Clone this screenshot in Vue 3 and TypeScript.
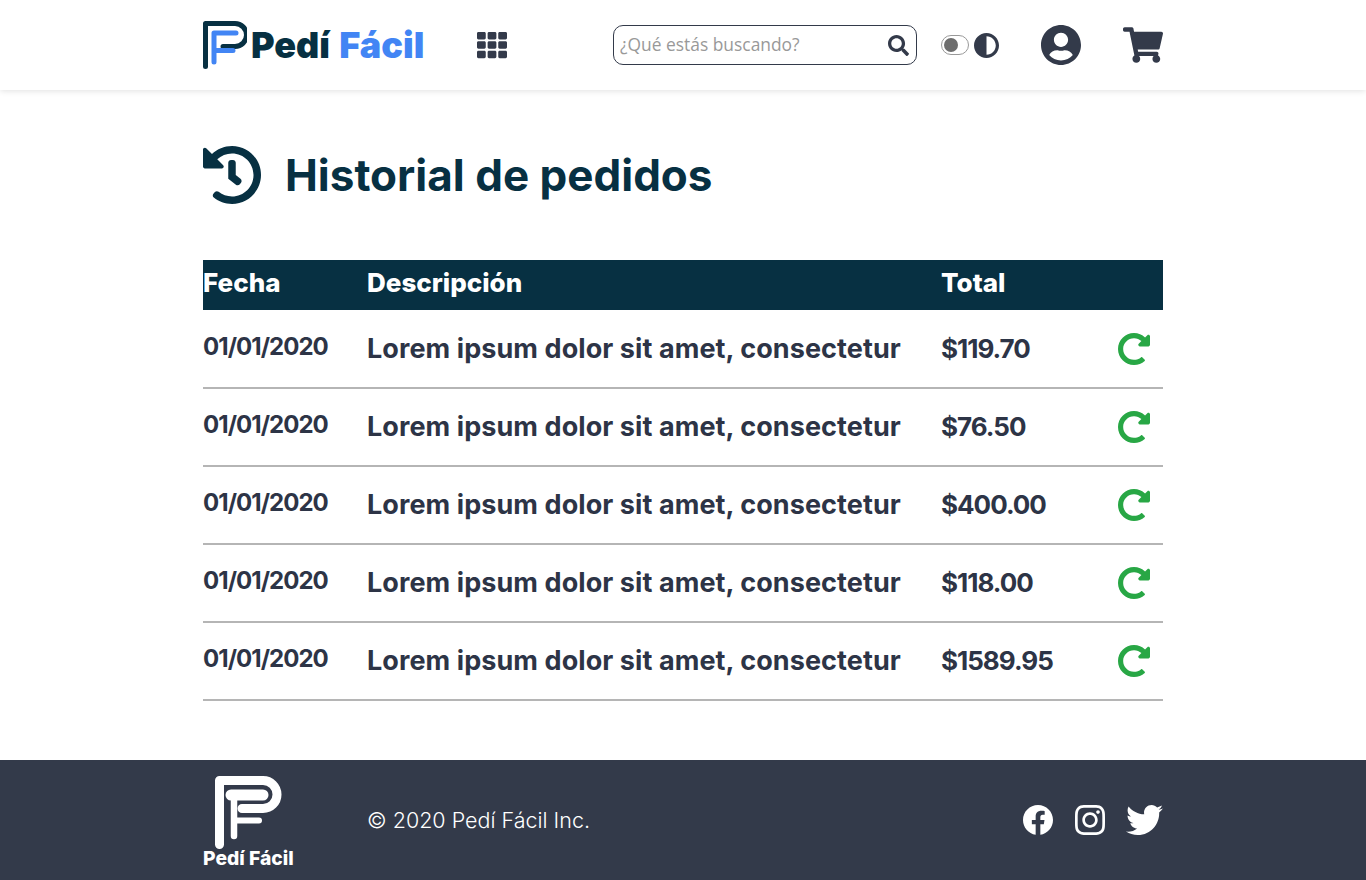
<script setup lang="ts">
const orders = [
  { date: '01/01/2020', text: 'Lorem ipsum dolor sit amet, consectetur', total: '$119.70' },
  { date: '01/01/2020', text: 'Lorem ipsum dolor sit amet, consectetur', total: '$76.50' },
  { date: '01/01/2020', text: 'Lorem ipsum dolor sit amet, consectetur', total: '$400.00' },
  { date: '01/01/2020', text: 'Lorem ipsum dolor sit amet, consectetur', total: '$118.00' },
  { date: '01/01/2020', text: 'Lorem ipsum dolor sit amet, consectetur', total: '$1589.95' },
]
</script>

<template>
  <div class="page">
    <header class="topbar">
      <div class="container topbar-inner">
        <a class="brand">
          <svg class="brand-mark" viewBox="0 0 44 48" fill="none" stroke-linejoin="round">
            <path d="M2.5 45.5V2.5H32a11.5 11.5 0 0 1 0 23H20" stroke="#073042" stroke-width="5" stroke-linecap="round" />
            <path d="M11 41V12H33M11 29.5H30" stroke="#4285f4" stroke-width="5" stroke-linecap="round" />
          </svg>
          <span class="brand-name"><span class="dark">Pedí</span> <span class="blue">Fácil</span></span>
        </a>
        <svg class="grid-icon" viewBox="0 0 512 512">
          <path fill="currentColor" d="M149.333 56v80c0 13.255-10.745 24-24 24H24c-13.255 0-24-10.745-24-24V56c0-13.255 10.745-24 24-24h101.333c13.255 0 24 10.745 24 24zm181.334 240v-80c0-13.255-10.745-24-24-24H205.333c-13.255 0-24 10.745-24 24v80c0 13.255 10.745 24 24 24h101.333c13.256 0 24.001-10.745 24.001-24zm32-240v80c0 13.255 10.745 24 24 24H488c13.255 0 24-10.745 24-24V56c0-13.255-10.745-24-24-24H386.667c-13.255 0-24 10.745-24 24zm-32 80V56c0-13.255-10.745-24-24-24H205.333c-13.255 0-24 10.745-24 24v80c0 13.255 10.745 24 24 24h101.333c13.256 0 24.001-10.745 24.001-24zm-205.334 56H24c-13.255 0-24 10.745-24 24v80c0 13.255 10.745 24 24 24h101.333c13.255 0 24-10.745 24-24v-80c0-13.255-10.745-24-24-24zM0 376v80c0 13.255 10.745 24 24 24h101.333c13.255 0 24-10.745 24-24v-80c0-13.255-10.745-24-24-24H24c-13.255 0-24 10.745-24 24zm386.667-56H488c13.255 0 24-10.745 24-24v-80c0-13.255-10.745-24-24-24H386.667c-13.255 0-24 10.745-24 24v80c0 13.255 10.745 24 24 24zm0 160H488c13.255 0 24-10.745 24-24v-80c0-13.255-10.745-24-24-24H386.667c-13.255 0-24 10.745-24 24v80c0 13.255 10.745 24 24 24zM181.333 376v80c0 13.255 10.745 24 24 24h101.333c13.255 0 24-10.745 24-24v-80c0-13.255-10.745-24-24-24H205.333c-13.255 0-24 10.745-24 24z" />
        </svg>
        <div class="search">
          <input type="text" placeholder="¿Qué estás buscando?" />
          <svg class="search-icon" viewBox="0 0 512 512">
            <path fill="currentColor" d="M505 442.7L405.3 343c-4.5-4.5-10.6-7-17-7H372c27.6-35.3 44-79.7 44-128C416 93.1 322.9 0 208 0S0 93.1 0 208s93.1 208 208 208c48.3 0 92.7-16.4 128-44v16.3c0 6.4 2.5 12.5 7 17l99.7 99.7c9.4 9.4 24.6 9.4 33.9 0l28.3-28.3c9.4-9.4 9.4-24.6.1-34zM208 336c-70.7 0-128-57.2-128-128 0-70.7 57.2-128 128-128 70.7 0 128 57.2 128 128 0 70.7-57.2 128-128 128z" />
          </svg>
        </div>
        <span class="switch"><span class="knob"></span></span>
        <svg class="contrast-icon" viewBox="8 8 496 496">
          <path fill="currentColor" d="M8 256c0 136.966 111.033 248 248 248s248-111.034 248-248S392.966 8 256 8 8 119.033 8 256zm248 184V72c101.705 0 184 82.311 184 184 0 101.705-82.311 184-184 184z" />
        </svg>
        <svg class="user-icon" viewBox="0 8 496 496">
          <path fill="currentColor" d="M248 8C111 8 0 119 0 256s111 248 248 248 248-111 248-248S385 8 248 8zm0 96c48.6 0 88 39.4 88 88s-39.4 88-88 88-88-39.4-88-88 39.4-88 88-88zm0 344c-58.7 0-111.3-26.6-146.5-68.2 18.8-35.4 55.6-59.8 98.5-59.8 2.4 0 4.8.4 7.1 1.1 13 4.2 26.6 6.9 40.9 6.9 14.3 0 28-2.7 40.9-6.9 2.3-.7 4.7-1.1 7.1-1.1 42.9 0 79.7 24.4 98.5 59.8C359.3 421.4 306.7 448 248 448z" />
        </svg>
        <svg class="cart-icon" viewBox="0 0 576 512">
          <path fill="currentColor" d="M528.12 301.319l47.273-208C578.806 78.301 567.391 64 551.99 64H159.208l-9.166-44.81C147.758 8.021 137.93 0 126.529 0H24C10.745 0 0 10.745 0 24v16c0 13.255 10.745 24 24 24h69.883l70.248 343.435C147.325 417.1 136 435.222 136 456c0 30.928 25.072 56 56 56s56-25.072 56-56c0-15.674-6.447-29.835-16.824-40h209.647C430.447 426.165 424 440.326 424 456c0 30.928 25.072 56 56 56s56-25.072 56-56c0-22.172-12.888-41.332-31.579-50.405l5.517-24.276c3.413-15.018-8.002-29.319-23.403-29.319H218.117l-6.545-32h293.145c11.206 0 20.92-7.754 23.403-18.681z" />
        </svg>
      </div>
    </header>

    <main class="container content">
      <div class="title-row">
        <svg class="history-icon" viewBox="8 8 496 496">
          <path fill="currentColor" d="M504 255.531c.253 136.64-111.18 248.372-247.82 248.468-59.015.042-113.223-20.53-155.822-54.911-11.077-8.94-11.905-25.541-1.839-35.607l11.267-11.267c8.609-8.609 22.353-9.551 31.891-1.984C173.062 425.135 212.781 440 256 440c101.705 0 184-82.311 184-184 0-101.705-82.311-184-184-184-48.814 0-93.149 18.969-126.068 49.932l50.754 50.754c10.08 10.08 2.941 27.314-11.313 27.314H24c-8.837 0-16-7.163-16-16V38.627c0-14.254 17.234-21.393 27.314-11.314l49.372 49.372C129.209 34.136 189.552 8 256 8c136.81 0 247.747 110.78 248 247.531zm-180.912 78.784l9.823-12.63c8.138-10.463 6.253-25.542-4.21-33.679L288 256.349V152c0-13.255-10.745-24-24-24h-16c-13.255 0-24 10.745-24 24v135.651l65.409 50.874c10.463 8.137 25.541 6.253 33.679-4.21z" />
        </svg>
        <h1>Historial de pedidos</h1>
      </div>

      <div class="orders">
        <div class="orders-head">
          <span>Fecha</span>
          <span>Descripción</span>
          <span>Total</span>
          <span></span>
        </div>
        <div v-for="(order, i) in orders" :key="i" class="orders-row">
          <span class="date">{{ order.date }}</span>
          <span class="desc">{{ order.text }}</span>
          <span class="total">{{ order.total }}</span>
          <svg class="redo-icon" viewBox="8 8 496 496">
            <path fill="currentColor" d="M256.455 8c66.269.119 126.437 26.233 170.859 68.685l35.715-35.715C478.149 25.851 504 36.559 504 57.941V192c0 13.255-10.745 24-24 24H345.941c-21.382 0-32.09-25.851-16.971-40.971l41.75-41.75c-30.864-28.899-70.801-44.907-113.23-45.273-92.398-.798-170.283 73.977-169.484 169.442C88.764 348.009 162.184 424 256 424c41.127 0 79.997-14.678 110.629-41.556 4.743-4.161 11.906-3.908 16.368.553l39.662 39.662c4.872 4.872 4.631 12.815-.482 17.433C378.202 479.813 319.926 504 256 504 119.034 504 8.001 392.967 8 256.002 7.999 119.193 119.646 7.755 256.455 8z" />
          </svg>
        </div>
      </div>
    </main>

    <footer class="footer">
      <div class="container footer-inner">
        <div class="footer-brand">
          <svg class="footer-mark" viewBox="0 0 67 73" fill="none" stroke="#fff">
            <path d="M4.5 68.5V4.5H48a14 14 0 0 1 0 28H27" stroke-width="9" stroke-linecap="round" stroke-linejoin="round" />
            <path d="M19 60V19H48" stroke-width="6.5" stroke-linecap="round" />
            <path d="M16 19H48" stroke-width="11" stroke-linecap="round" />
            <path d="M19 44.5H44" stroke-width="6" stroke-linecap="round" />
          </svg>
          <span class="footer-name">Pedí Fácil</span>
        </div>
        <span class="copyright">© 2020 Pedí Fácil Inc.</span>
        <div class="social">
          <svg class="fb" viewBox="8 8 496 496">
            <path fill="currentColor" d="M504 256C504 119 393 8 256 8S8 119 8 256c0 123.78 90.69 226.38 209.25 245V327.69h-63V256h63v-54.64c0-62.15 37-96.48 93.67-96.48 27.14 0 55.52 4.84 55.52 4.84v61h-31.28c-30.8 0-40.41 19.12-40.41 38.73V256h68.78l-11 71.69h-57.78V501C413.31 482.38 504 379.78 504 256z" />
          </svg>
          <svg class="ig" viewBox="0 32 448 448">
            <path fill="currentColor" d="M224.1 141c-63.6 0-114.9 51.3-114.9 114.9s51.3 114.9 114.9 114.9S339 319.5 339 255.9 287.7 141 224.1 141zm0 189.6c-41.1 0-74.7-33.5-74.7-74.7s33.5-74.7 74.7-74.7 74.7 33.5 74.7 74.7-33.6 74.7-74.7 74.7zm146.4-194.3c0 14.9-12 26.8-26.8 26.8-14.9 0-26.8-12-26.8-26.8s12-26.8 26.8-26.8 26.8 12 26.8 26.8zm76.1 27.2c-1.7-35.9-9.9-67.7-36.2-93.9-26.2-26.2-58-34.4-93.9-36.2-37-2.1-147.9-2.1-184.9 0-35.8 1.7-67.6 9.9-93.9 36.1s-34.4 58-36.2 93.9c-2.1 37-2.1 147.9 0 184.9 1.7 35.9 9.9 67.7 36.2 93.9s58 34.4 93.9 36.2c37 2.1 147.9 2.1 184.9 0 35.9-1.7 67.7-9.9 93.9-36.2 26.2-26.2 34.4-58 36.2-93.9 2.1-37 2.1-147.8 0-184.8zM398.8 388c-7.8 19.6-22.9 34.7-42.6 42.6-29.5 11.7-99.5 9-132.1 9s-102.7 2.6-132.1-9c-19.6-7.8-34.7-22.9-42.6-42.6-11.7-29.5-9-99.5-9-132.1s-2.6-102.7 9-132.1c7.8-19.6 22.9-34.7 42.6-42.6 29.5-11.7 99.5-9 132.1-9s102.7-2.6 132.1 9c19.6 7.8 34.7 22.9 42.6 42.6 11.7 29.5 9 99.5 9 132.1s2.7 102.7-9 132.1z" />
          </svg>
          <svg class="tw" viewBox="0 48 512 416">
            <path fill="currentColor" d="M459.37 151.716c.325 4.548.325 9.097.325 13.645 0 138.72-105.583 298.558-298.558 298.558-59.452 0-114.68-17.219-161.137-47.106 8.447.974 16.568 1.299 25.34 1.299 49.055 0 94.213-16.568 130.274-44.832-46.132-.975-84.792-31.188-98.112-72.772 6.498.974 12.995 1.624 19.818 1.624 9.421 0 18.843-1.3 27.614-3.573-48.081-9.747-84.143-51.98-84.143-102.985v-1.299c13.969 7.797 30.214 12.67 47.431 13.319-28.264-18.843-46.781-51.005-46.781-87.391 0-19.492 5.197-37.36 14.294-52.954 51.655 63.675 129.3 105.258 216.365 109.807-1.624-7.797-2.599-15.918-2.599-24.04 0-57.828 46.782-104.934 104.934-104.934 30.213 0 57.502 12.67 76.67 33.137 23.715-4.548 46.456-13.32 66.599-25.34-7.798 24.366-24.366 44.833-46.132 57.827 21.117-2.273 41.584-8.122 60.426-16.243-14.292 20.791-32.161 39.308-52.628 54.253z" />
          </svg>
        </div>
      </div>
    </footer>
  </div>
</template>

<style>
html,
body {
  background: #fff;
}
</style>

<style scoped>
.page {
  min-height: 880px;
  display: flex;
  flex-direction: column;
  font-family: Inter, 'Liberation Sans', sans-serif;
  color: #2d3446;
}

.container {
  width: 960px;
  margin: 0 auto;
}

.topbar {
  height: 90px;
  background: #fff;
  box-shadow: 0 1px 6px rgba(0, 0, 0, 0.12);
}

.topbar-inner {
  height: 90px;
  display: flex;
  align-items: center;
  color: #333a4a;
}

.brand {
  display: flex;
  align-items: center;
  width: 274px;
}

.brand-mark {
  width: 44px;
  height: 48px;
  flex: none;
}

.brand-name {
  margin-left: 4px;
  font-size: 36px;
  font-weight: 900;
  word-spacing: 2px;
  white-space: nowrap;
}

.dark {
  color: #073042;
}

.blue {
  color: #4285f4;
}

.grid-icon {
  width: 30px;
  height: 30px;
  flex: none;
}

.search {
  width: 304px;
  height: 40px;
  margin-left: 106px;
  box-sizing: border-box;
  display: flex;
  align-items: center;
  padding: 0 7px 0 6px;
  border: 1px solid #333a4a;
  border-radius: 10px;
  flex: none;
}

.search input {
  flex: 1;
  min-width: 0;
  border: 0;
  outline: 0;
  padding: 0 0 2px;
  background: none;
  font-family: 'Open Sans', sans-serif;
  font-size: 17.4px;
  font-weight: 400;
  color: #333a4a;
}

.search input::placeholder {
  color: #999;
  opacity: 1;
}

.search-icon {
  width: 21px;
  height: 21px;
  flex: none;
}

.switch {
  width: 28px;
  height: 20px;
  margin-left: 24px;
  box-sizing: border-box;
  display: flex;
  align-items: center;
  padding-left: 2px;
  border: 1px solid #999;
  border-radius: 10px;
  flex: none;
}

.knob {
  width: 14px;
  height: 14px;
  border-radius: 50%;
  background: #6d6d6d;
}

.contrast-icon {
  width: 25px;
  height: 25px;
  margin-left: 5px;
  flex: none;
}

.user-icon {
  width: 40px;
  height: 40px;
  margin-left: 42px;
  flex: none;
}

.cart-icon {
  width: 40px;
  height: 36px;
  margin-left: 42px;
  flex: none;
}

.content {
  flex: 1;
  padding-top: 55px;
}

.title-row {
  display: flex;
  align-items: center;
  height: 60px;
  margin-bottom: 55px;
  color: #073042;
}

.history-icon {
  width: 58px;
  height: 58px;
  flex: none;
}

h1 {
  margin: 0 0 0 24px;
  font-size: 44px;
  font-weight: 700;
  line-height: 60px;
}

.orders-head,
.orders-row {
  display: grid;
  grid-template-columns: 164px 574px 177px 45px;
  align-items: center;
}

.orders-head {
  height: 50px;
  margin-bottom: 1px;
  padding-bottom: 5px;
  box-sizing: border-box;
  background: #073042;
  color: #fff;
  font-size: 26px;
  font-weight: 800;
}

.orders-row {
  height: 78px;
  padding-bottom: 2px;
  box-sizing: border-box;
  border-bottom: 2px solid #b5b5b5;
  font-weight: 700;
  white-space: nowrap;
}

.date {
  font-size: 24px;
  letter-spacing: -0.95px;
  padding-bottom: 3px;
}

.desc {
  font-size: 27px;
  letter-spacing: 0.08px;
}

.total {
  font-size: 26px;
  letter-spacing: -1px;
}

.redo-icon {
  width: 32px;
  height: 32px;
  margin-top: 2px;
  color: #28a745;
}

.footer {
  height: 120px;
  background: #333a4a;
  color: #fff;
}

.footer-inner {
  height: 120px;
  display: flex;
  align-items: center;
}

.footer-brand {
  width: 164px;
  flex: none;
  display: flex;
  flex-direction: column;
  align-items: flex-start;
  padding-top: 2px;
}

.footer-mark {
  width: 67px;
  height: 73px;
  margin-left: 12px;
}

.footer-name {
  font-size: 19.3px;
  font-weight: 800;
  line-height: 18px;
  white-space: nowrap;
}

.copyright {
  font-size: 21.5px;
  font-weight: 300;
  white-space: nowrap;
}

.social {
  margin-left: auto;
  display: flex;
  align-items: center;
  gap: 21px;
}

.fb,
.ig {
  width: 30px;
  height: 30px;
}

.fb {
  margin-right: 1px;
}

.tw {
  width: 37px;
  height: 30px;
}
</style>
